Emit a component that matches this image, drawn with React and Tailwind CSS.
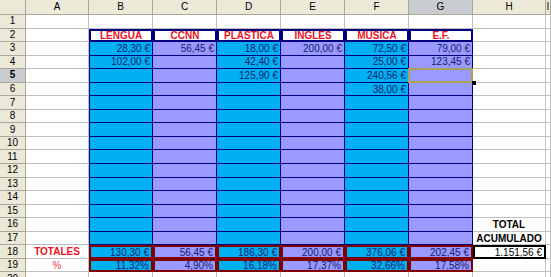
import React from 'react';

// hoja de cálculo: gastos por asignatura
const COLS = ['A', 'B', 'C', 'D', 'E', 'F', 'G', 'H', 'I'];
const SUBJECTS = ['LENGUA', 'CCNN', 'PLASTICA', 'INGLES', 'MUSICA', 'E.F.'];
const DATA = {
  3: ['28,30 €', '56,45 €', '18,00 €', '200,00 €', '72,50 €', '79,00 €'],
  4: ['102,00 €', '', '42,40 €', '', '25,00 €', '123,45 €'],
  5: ['', '', '125,90 €', '', '240,56 €', ''],
  6: ['', '', '', '', '38,00 €', ''],
};
const TOTALS = ['130,30 €', '56,45 €', '186,30 €', '200,00 €', '376,06 €', '202,45 €'];
const PCTS = ['11,32%', '4,90%', '16,18%', '17,37%', '32,66%', '17,58%'];
const ROWS = Array.from({ length: 20 }, (_, i) => i + 1);

const ColHeader = ({ label }) => (
  <div
    className={`flex items-center justify-center border-r border-b border-[#aca899] text-[10px] leading-none text-black ${
      label === 'G' ? 'bg-[#c9ccd1]' : 'bg-[#ece9d8]'
    }`}
  >
    {label}
  </div>
);

const RowHeader = ({ n }) => (
  <div
    className={`flex items-center justify-center border-r border-b border-[#aca899] text-[10px] leading-none text-black ${
      n === 5 ? 'bg-[#c9ccd1] font-bold' : 'bg-[#ece9d8]'
    }`}
  >
    {n}
  </div>
);

function Cell({ r, c }) {
  const subj = c >= 1 && c <= 6;
  const blue = c === 1 || c === 3 || c === 5;
  const fill = blue ? 'bg-[#00b0f0]' : 'bg-[#9999ff]';
  const base = 'relative flex items-center overflow-visible whitespace-nowrap text-[10px] leading-[13px]';

  if (subj && r === 2) {
    return (
      <div className={`${base} justify-center bg-white border-2 border-[#000080] font-bold text-[#ee1122]`}>
        {SUBJECTS[c - 1]}
      </div>
    );
  }

  if (subj && r >= 3 && r <= 17) {
    const val = DATA[r] ? DATA[r][c - 1] : '';
    const sel = r === 5 && c === 6;
    return (
      <div
        className={`${base} justify-end pr-[2px] ${fill} border-b border-r border-[#000080] text-[#161c6e] ${
          c === 1 ? 'border-l' : ''
        }`}
      >
        {val}
        {sel && (
          <>
            <div className="absolute -left-px -top-px -right-px -bottom-px border-2 border-[#a8a25a]" />
            <div className="absolute z-10 -right-[4px] -bottom-[3px] w-[4px] h-[4px] bg-black" />
          </>
        )}
      </div>
    );
  }

  if (subj && (r === 18 || r === 19)) {
    return (
      <div className={`${base} justify-end pr-[2px] ${fill} border-2 border-[#800000] text-[#161c6e]`}>
        {r === 18 ? TOTALS[c - 1] : PCTS[c - 1]}
      </div>
    );
  }

  if (c === 7 && r === 18) {
    return (
      <div className={`${base} justify-end pr-[2px] bg-white border-2 border-black text-black`}>
        1.151,56 €
      </div>
    );
  }

  let text = null;
  let align = 'justify-center';
  let tone = 'text-black';
  if (c === 0 && r === 18) {
    text = 'TOTALES';
    tone = 'font-bold text-[#ee1122]';
  } else if (c === 0 && r === 19) {
    text = '%';
    tone = 'text-[#e43a4a]';
  } else if (c === 7 && r === 16) {
    text = 'TOTAL';
    tone = 'font-bold text-black';
  } else if (c === 7 && r === 17) {
    text = 'ACUMULADO';
    tone = 'font-bold text-black';
  }

  return (
    <div className={`${base} ${align} ${tone} bg-white border-r border-b border-[#c0c0c0]`}>
      {text}
    </div>
  );
}

export default function App() {
  return (
    <div
      className="w-[551px] h-[277px] overflow-hidden bg-white"
      style={{ fontFamily: '"Liberation Sans", Arial, sans-serif' }}
    >
      <div className="grid grid-cols-[26px_63px_64px_64px_64px_64px_64px_64px_73px_1fr] grid-rows-[15px_repeat(20,13.56px)]">
        <div className="bg-[#ece9d8] border-r border-b border-[#aca899]" />
        {COLS.map((l) => (
          <ColHeader key={l} label={l} />
        ))}
        {ROWS.map((r) => (
          <React.Fragment key={r}>
            <RowHeader n={r} />
            {COLS.map((l, c) => (
              <Cell key={l} r={r} c={c} />
            ))}
          </React.Fragment>
        ))}
      </div>
    </div>
  );
}
